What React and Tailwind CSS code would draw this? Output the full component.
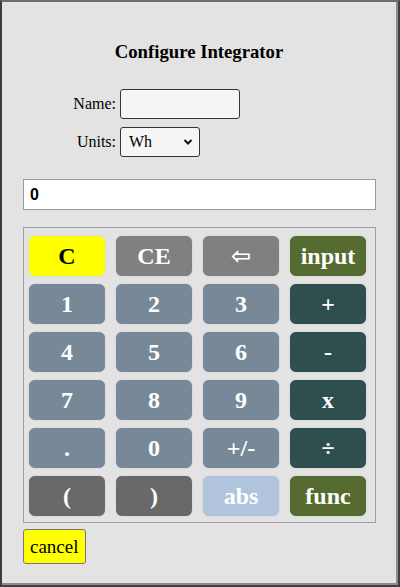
import React from "react";

const keys = [
  ["C", "bg-[#ffff00] text-black"],
  ["CE", "bg-[#808080] text-white"],
  ["\u21e6", "bg-[#808080] text-white"],
  ["input", "bg-[#556b2f] text-white"],
  ["1", "bg-[#778899] text-white"],
  ["2", "bg-[#778899] text-white"],
  ["3", "bg-[#778899] text-white"],
  ["+", "bg-[#2f4f4f] text-white"],
  ["4", "bg-[#778899] text-white"],
  ["5", "bg-[#778899] text-white"],
  ["6", "bg-[#778899] text-white"],
  ["-", "bg-[#2f4f4f] text-white"],
  ["7", "bg-[#778899] text-white"],
  ["8", "bg-[#778899] text-white"],
  ["9", "bg-[#778899] text-white"],
  ["x", "bg-[#2f4f4f] text-white"],
  [".", "bg-[#778899] text-white"],
  ["0", "bg-[#778899] text-white"],
  ["+/-", "bg-[#778899] text-white"],
  ["\u00f7", "bg-[#2f4f4f] text-white"],
  ["(", "bg-[#696969] text-white"],
  [")", "bg-[#696969] text-white"],
  ["abs", "bg-[#b0c4de] text-white"],
  ["func", "bg-[#556b2f] text-white"],
];

export default function App() {
  return (
    <div className="w-[400px] h-[587px] box-border border-2 border-t-[#6c6c6c] border-l-[#3c3c3c] border-r-[#404040] border-b-[#404040] font-['Liberation_Serif',serif]">
      <div className="h-full box-border border-r-2 border-b-2 border-[#8c8c8c] bg-[#e3e3e3] flex flex-col">
        <div className="pt-[39px] text-center font-bold text-[18.72px] leading-[22px] text-black">
          Configure Integrator
        </div>
        <div className="mt-[26px] grid grid-cols-[114px_auto] gap-x-[4px] gap-y-[8px] items-center justify-start">
          <label className="text-right text-[16px] text-black">Name:</label>
          <input
            type="text"
            className="w-[120px] h-[30px] box-border border border-[#333] rounded-[3px] bg-[#f5f5f5] outline-none"
          />
          <label className="text-right text-[16px] text-black">Units:</label>
          <div className="relative w-[80px] h-[30px]">
            <select className="appearance-none w-[80px] h-[30px] box-border border border-[#333] rounded-[3px] bg-[#f5f5f5] pl-[8px] text-[16px] text-black font-['Liberation_Serif',serif] outline-none">
              <option>Wh</option>
            </select>
            <svg
              className="absolute right-[7px] top-[11px] pointer-events-none"
              width="10"
              height="8"
              viewBox="0 0 10 8"
            >
              <path d="M1.5 2 L5 5.5 L8.5 2" fill="none" stroke="#111" strokeWidth="2" />
            </svg>
          </div>
        </div>
        <div className="mt-[22px] ml-[21px] w-[353px] h-[31px] box-border border border-[#9a9a9a] bg-white flex items-center pl-[6px] font-['Liberation_Sans',sans-serif] font-bold text-[16px] text-black">
          0
        </div>
        <div className="mt-[17px] ml-[21px] w-[353px] box-border border border-[#a0a0a0] pt-[7px] pb-[5px] pl-[4px]">
          <div className="grid grid-cols-[78px_78px_78px_78px] gap-x-[9px] gap-y-[6px]">
            {keys.map(([label, cls]) => (
              <button
                key={label}
                className={`h-[42px] rounded-[7px] border border-[#dcdcdc] flex items-center justify-center font-bold text-[24px] leading-none font-['Liberation_Serif','DejaVu_Sans',serif] ${cls}`}
              >
                {label}
              </button>
            ))}
          </div>
        </div>
        <div className="mt-[6px] ml-[21px]">
          <button className="h-[35px] px-[6px] box-border border border-[#777] rounded-[3px] bg-[#ffff00] text-[19px] text-black font-['Liberation_Serif',serif] leading-none">
            cancel
          </button>
        </div>
      </div>
    </div>
  );
}
